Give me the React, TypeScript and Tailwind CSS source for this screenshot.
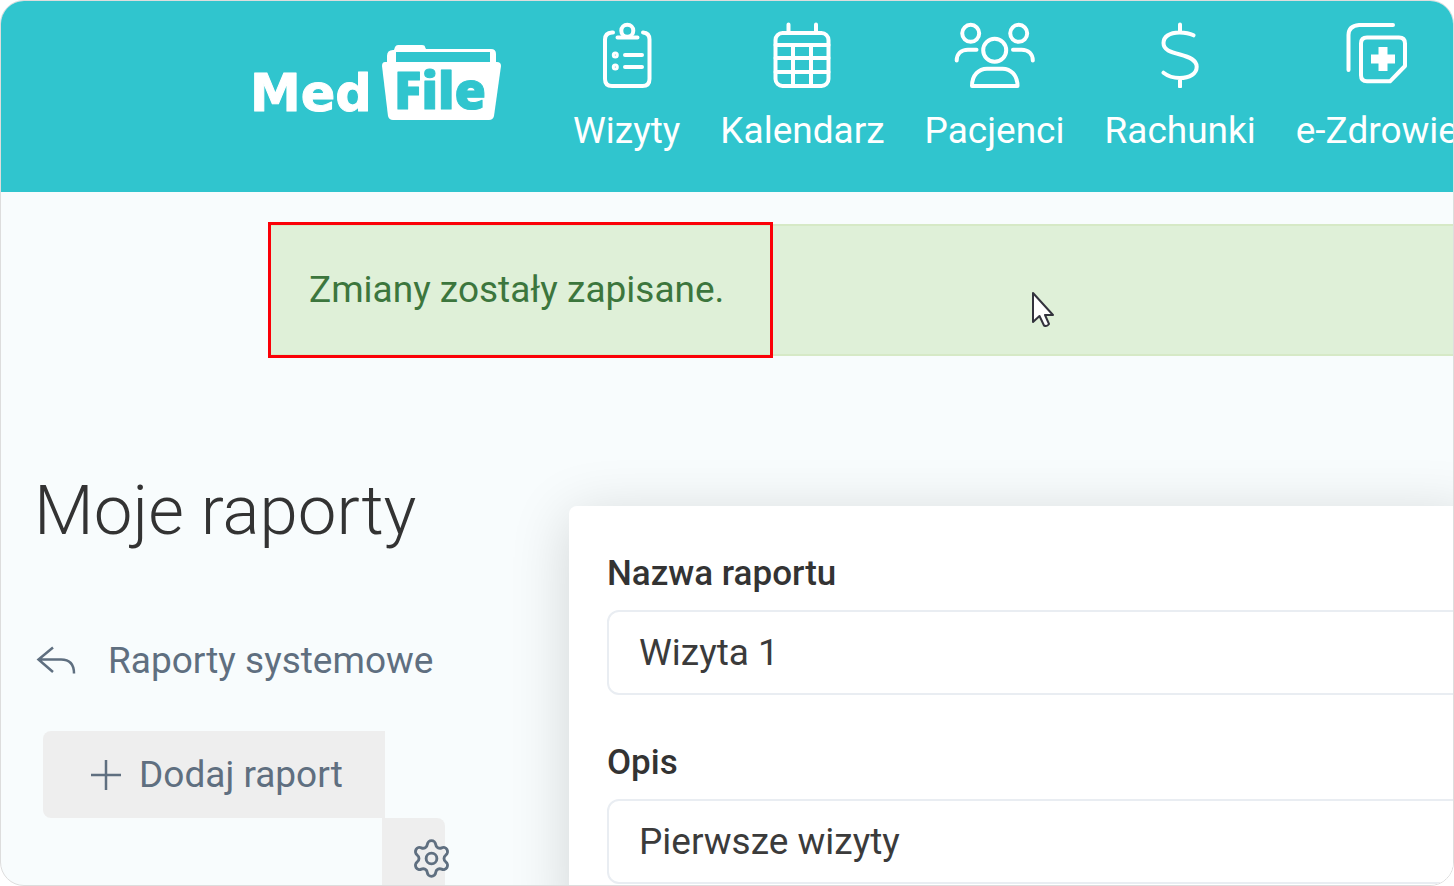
import { ReactNode } from 'react';
import { Settings } from 'lucide-react';

interface NavItem {
  label: string;
  width: number;
  icon: ReactNode;
}

const navItems: NavItem[] = [
  {
    label: 'Wizyty',
    width: 52,
    icon: (
      <>
        <path d="M12 10.500h-1Q4 11 4 17.500V57q0 7 7 7h30.500q7 0 7-7V17.500q0-6.500-6.500-7" />
        <circle cx="26.300" cy="8.700" r="6" />
        <path d="M16.500 15.500h20M24 33h17M24 45h17" />
        <circle cx="14.300" cy="33" r="1.500" />
        <circle cx="14.300" cy="45" r="1.500" />
      </>
    ),
  },
  {
    label: 'Kalendarz',
    width: 58,
    icon: (
      <>
        <rect x="2.500" y="11" width="53" height="53" rx="7" />
        <path d="M15.500 2.500V11M43 2.500V11M2.500 23h53M2.500 36h53M2.500 50h53M20 23v41M38 23v41" />
      </>
    ),
  },
  {
    label: 'Pacjenci',
    width: 82,
    icon: (
      <>
        <circle cx="16.700" cy="11.300" r="8.500" />
        <circle cx="64.700" cy="11.300" r="8.500" />
        <circle cx="40.700" cy="28.300" r="11.500" />
        <path d="M22.500 27.700H14C7 27.700 2.700 32 2.700 38.500M59 27.700h8.500c7 0 11.300 4.300 11.300 10.800" />
        <path d="M18 64c0-11 7-17.300 15-17.300h15.500c8 0 15 6.300 15 17.300z" />
      </>
    ),
  },
  {
    label: 'Rachunki',
    width: 38,
    icon: (
      <path d="M19 2.500V10M19 57v7.500M32.500 13.300C28 11 23 10.500 18.500 10.500 8 10.500 2.500 15 2.500 21c0 7 7 9 16.500 11.500S35.700 38 35.700 44.700c0 7-7 11.300-17 11.300-6.500 0-12-2-16.200-5.300" />
    ),
  },
  {
    label: 'e-Zdrowie',
    width: 62,
    icon: (
      <>
        <path d="M47 3H13Q2.500 4 2.500 13v35" />
        <path d="M21 15.500h32q6 0 6 6V44L44 59.300H21q-6 0-6-6V21.500q0-6 6-6z" />
        <path d="M37 25v24M25 37h24" strokeWidth="9" strokeLinecap="butt" />
      </>
    ),
  },
];

const Logo = () => (
  <a href="#" aria-label="MedFile" className="shrink-0">
    <svg width="256" height="90" viewBox="0 0 256 90" fill="#fff">
      <text
        x="3"
        y="70"
        fontFamily="DejaVu Sans"
        fontWeight="700"
        fontSize="51"
        stroke="#fff"
        strokeWidth="1"
        strokeLinejoin="round"
      >
        Med
      </text>
      <path d="M140 24v-9q0-6 6-6h1l1-3q1-2 3-2h24q3 0 3 2l1 2h65q5 0 5 5v11h-6V11h-94v13z" />
      <path d="M138 21h112q4 0 4 4l-7 50q-1 4-5 4H146q-4 0-5-4l-6-50q0-4 3-4z" />
      <text
        x="147"
        y="68"
        fontFamily="Open Sans"
        fontWeight="800"
        fontSize="51"
        fill="#30c5ce"
        stroke="#30c5ce"
        strokeWidth="1"
        strokeLinejoin="round"
      >
        File
      </text>
    </svg>
  </a>
);

const Header = () => (
  <header className="flex shrink-0 items-start overflow-hidden bg-[#30c5ce] pb-[38px] pl-[246px] text-white">
    <div className="mr-[70px] pt-10">
      <Logo />
    </div>
    <nav className="flex gap-10 pt-[21px]">
      {navItems.map((item) => (
        <a key={item.label} href="#" className="flex shrink-0 flex-col items-center gap-5 whitespace-nowrap">
          <svg
            width={item.width}
            height="66"
            viewBox={`0 0 ${item.width} 66`}
            fill="none"
            stroke="currentColor"
            strokeWidth="4"
            strokeLinecap="round"
            strokeLinejoin="round"
          >
            {item.icon}
          </svg>
          <span className="leading-[46px]">{item.label}</span>
        </a>
      ))}
    </nav>
  </header>
);

const Alert = () => (
  <div
    role="status"
    className="relative ml-[268px] mt-8 border-2 border-r-0 border-[#d6e9c6] bg-[#dff0d8] px-[38px] py-10 leading-[48px] text-[#3c763d]"
  >
    Zmiany zostały zapisane.
    <div className="absolute -left-[3px] -top-1 h-[136px] w-[505px] border-3 border-[#fb0007]" />
    <svg className="absolute left-[760px] top-[64px]" width="26" height="40" viewBox="0 0 26 40">
      <path
        d="M2 3v29l6.500-6 4.500 9.500q3 1.500 5-1.500l-4-9h8z"
        fill="#fff"
        stroke="#33333d"
        strokeWidth="2"
        strokeLinejoin="round"
      />
    </svg>
  </div>
);

const Sidebar = () => (
  <aside className="w-[568px] shrink-0 pl-[33px] pt-[114px] text-[#5f6f80]">
    <h1 className="text-[69px] font-light leading-[82px] text-[#333]">Moje raporty</h1>
    <a href="#" className="mt-[85px] flex items-center gap-8 leading-[48px]">
      <svg width="42" height="30" viewBox="0 0 42 30" fill="none" stroke="currentColor" strokeWidth="2.500">
        <path d="M19 1.500L4.500 13.500 19 26M4.500 13.500H27q13 0 13 14" />
      </svg>
      Raporty systemowe
    </a>
    <div className="ml-[9px] mt-[46px] flex w-[402px] flex-col">
      <button className="flex h-[87px] w-[342px] items-center gap-[18px] rounded-l-lg bg-[#eee] pl-12">
        <svg width="30" height="30" viewBox="0 0 30 30" stroke="currentColor" strokeWidth="2.500">
          <path d="M15 0v30M0 15h30" />
        </svg>
        Dodaj raport
      </button>
      <button aria-label="Ustawienia" className="flex h-[87px] w-[63px] self-end rounded-r-lg bg-[#eee] pl-7 pt-[19px]">
        <Settings size={43} strokeWidth={1.6} className="shrink-0" />
      </button>
    </div>
  </aside>
);

const Field = ({ id, label, value }: { id: string; label: string; value: string }) => (
  <div className="flex flex-col gap-3">
    <label htmlFor={id} className="text-[35px] font-medium leading-[48px] text-[#333]">
      {label}
    </label>
    <input
      id={id}
      defaultValue={value}
      className="h-[85px] w-full rounded-xl border-2 border-[#e9edf2] bg-white px-[30px] text-[#3b3b3b]"
    />
  </div>
);

export default function App() {
  return (
    <div className="flex h-screen flex-col overflow-hidden rounded-3xl border border-[#ddd] bg-[#f8fcfd] font-['Roboto',sans-serif] text-[37px]">
      <Header />
      <Alert />
      <main className="flex">
        <Sidebar />
        <form className="-mr-6 mt-[150px] flex min-w-0 flex-1 flex-col gap-11 rounded-tl-lg bg-white pb-10 pl-[38px] pt-11 shadow-[0_10px_60px_rgba(0,0,0,0.16)]">
          <Field id="name" label="Nazwa raportu" value="Wizyta 1" />
          <Field id="description" label="Opis" value="Pierwsze wizyty" />
        </form>
      </main>
    </div>
  );
}
